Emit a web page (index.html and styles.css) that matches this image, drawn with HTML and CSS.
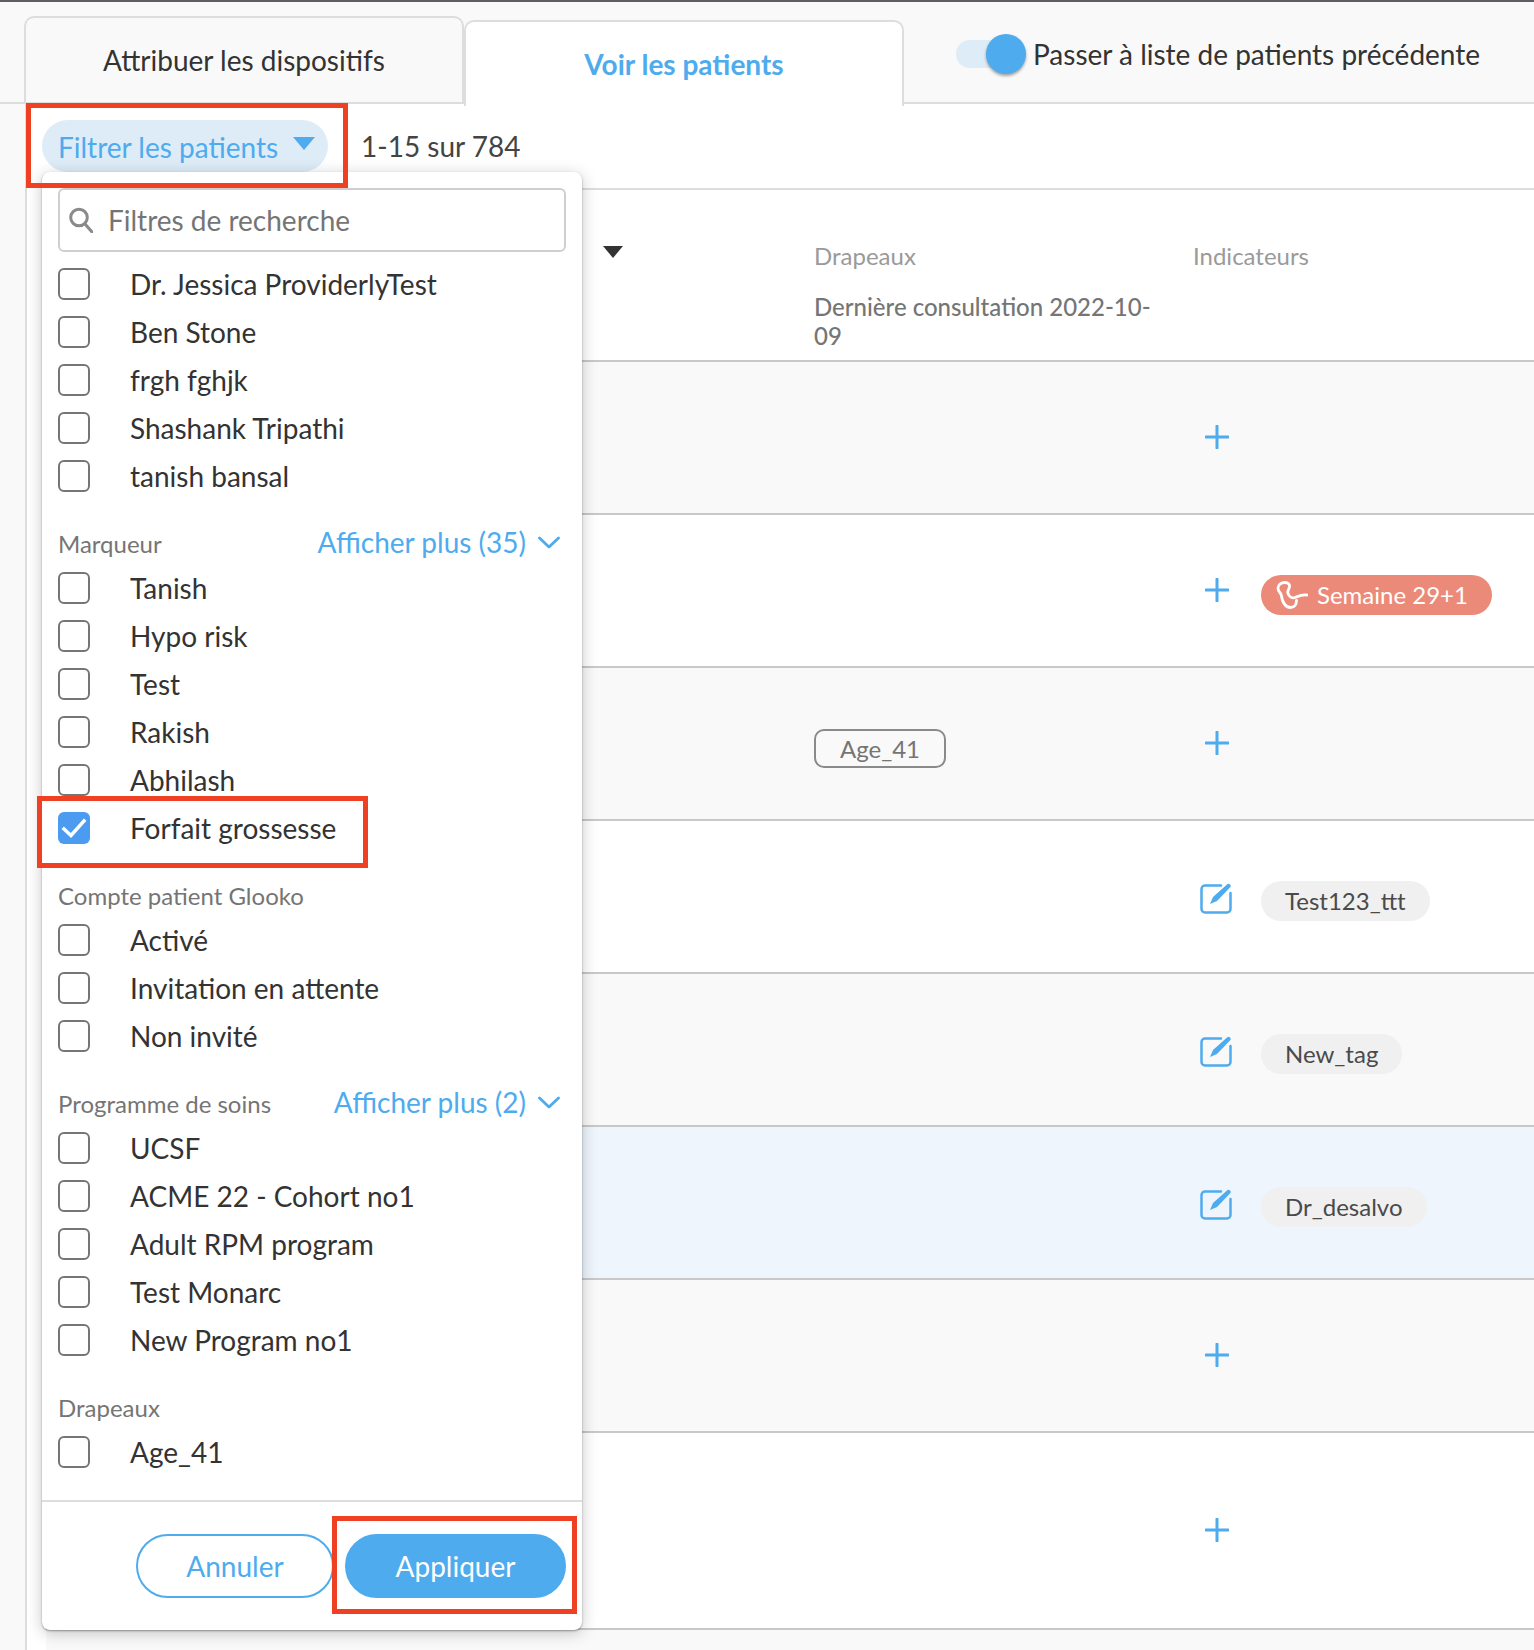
FILE: index.html
```html
<!DOCTYPE html>
<html lang="fr">
<head>
<meta charset="utf-8">
<title>Voir les patients</title>
<link rel="stylesheet" href="styles.css">
</head>
<body>
<div class="page">
  <header class="tabs">
    <div class="tab tab-idle">Attribuer les dispositifs</div>
    <div class="tab tab-active">Voir les patients</div>
    <div class="switch-wrap">
      <span class="switch"><span class="knob"></span></span>
      <span class="switch-label">Passer à liste de patients précédente</span>
    </div>
  </header>
  <main class="panel">
    <div class="toolbar">
      <div class="filter-pill"><span class="pill-text">Filtrer les patients</span><span class="pill-caret"></span></div>
      <span class="count">1-15 sur 784</span>
    </div>
    <div class="table-head">
      <div class="head-col1"><span class="sort-caret"></span></div>
      <div class="head-col2">
        <div class="head-title">Drapeaux</div>
        <div class="head-sub">Dernière consultation 2022-10-09</div>
      </div>
      <div class="head-col3"><div class="head-title">Indicateurs</div></div>
    </div>

    <div class="row row-gray"><div></div><div></div><div class="cell-ind"><span class="act">
      <svg class="plus" viewBox="0 0 24 24"><path d="M12 1v22M1 12h22"/></svg></span></div></div>

    <div class="row"><div></div><div></div><div class="cell-ind"><span class="act">
      <svg class="plus" viewBox="0 0 24 24"><path d="M12 1v22M1 12h22"/></svg></span>
      <span class="tag tag-red">
        <svg class="fetus" viewBox="0 0 32 28"><path d="M9 1.500C5 1.500 2 4 2 7.500C2 10.500 5 11.500 5.500 15C6 20 9 26.500 14.500 26.500C18.500 26.500 20.500 23 20.500 19.500M9 1.500C12 1.500 14 3.500 13.500 6C13 8.500 11 9.500 12 12.500C13 15.500 16 17.500 19 16.500C22 15.500 25 13 31 14"/></svg>
        Semaine 29+1</span></div></div>

    <div class="row row-gray"><div></div><div class="cell-flag"><span class="flag">Age_41</span></div><div class="cell-ind"><span class="act">
      <svg class="plus" viewBox="0 0 24 24"><path d="M12 1v22M1 12h22"/></svg></span></div></div>

    <div class="row"><div></div><div></div><div class="cell-ind"><span class="act">
      <svg class="edit" viewBox="0 0 32 31"><path class="edit-box" d="M21 2.500H5A3.500 3.500 0 0 0 1.500 6v20A3.500 3.500 0 0 0 5 29.500h22a3.500 3.500 0 0 0 3.500-3.500V10"/><path class="edit-pen" d="M10 21l3-7L27 1.500c1-1 2-1 3 0s1 2 0 3L17 18z"/></svg></span>
      <span class="tag tag-gray">Test123_ttt</span></div></div>

    <div class="row row-gray"><div></div><div></div><div class="cell-ind"><span class="act">
      <svg class="edit" viewBox="0 0 32 31"><path class="edit-box" d="M21 2.500H5A3.500 3.500 0 0 0 1.500 6v20A3.500 3.500 0 0 0 5 29.500h22a3.500 3.500 0 0 0 3.500-3.500V10"/><path class="edit-pen" d="M10 21l3-7L27 1.500c1-1 2-1 3 0s1 2 0 3L17 18z"/></svg></span>
      <span class="tag tag-gray">New_tag</span></div></div>

    <div class="row row-blue"><div></div><div></div><div class="cell-ind"><span class="act">
      <svg class="edit" viewBox="0 0 32 31"><path class="edit-box" d="M21 2.500H5A3.500 3.500 0 0 0 1.500 6v20A3.500 3.500 0 0 0 5 29.500h22a3.500 3.500 0 0 0 3.500-3.500V10"/><path class="edit-pen" d="M10 21l3-7L27 1.500c1-1 2-1 3 0s1 2 0 3L17 18z"/></svg></span>
      <span class="tag tag-gray">Dr_desalvo</span></div></div>

    <div class="row row-gray"><div></div><div></div><div class="cell-ind"><span class="act">
      <svg class="plus" viewBox="0 0 24 24"><path d="M12 1v22M1 12h22"/></svg></span></div></div>

    <div class="row row-tall"><div></div><div></div><div class="cell-ind"><span class="act">
      <svg class="plus" viewBox="0 0 24 24"><path d="M12 1v22M1 12h22"/></svg></span></div></div>

    <div class="row row-gray row-cut"></div>
  </main>

  <aside class="popup">
    <div class="popup-body">
      <div class="search">
        <svg class="search-ico" viewBox="0 0 24 26"><circle cx="10" cy="10.500" r="8.300"/><path d="M16 17l7 8"/></svg>
        <span>Filtres de recherche</span>
      </div>
      <div class="opt"><span class="box"></span>Dr. Jessica ProviderlyTest</div>
      <div class="opt"><span class="box"></span>Ben Stone</div>
      <div class="opt"><span class="box"></span>frgh fghjk</div>
      <div class="opt"><span class="box"></span>Shashank Tripathi</div>
      <div class="opt"><span class="box"></span>tanish bansal</div>

      <div class="group-head"><span class="group-label">Marqueur</span><span class="more">Afficher plus (35)<svg class="chev" viewBox="0 0 22 13"><path d="M1.500 2l9.500 9 9.500-9"/></svg></span></div>
      <div class="opt"><span class="box"></span>Tanish</div>
      <div class="opt"><span class="box"></span>Hypo risk</div>
      <div class="opt"><span class="box"></span>Test</div>
      <div class="opt"><span class="box"></span>Rakish</div>
      <div class="opt"><span class="box"></span>Abhilash</div>
      <div class="opt"><span class="box box-on"><svg viewBox="0 0 32 32"><path d="M6 17l7 6.500L26 9"/></svg></span>Forfait grossesse</div>

      <div class="group-head"><span class="group-label">Compte patient Glooko</span></div>
      <div class="opt"><span class="box"></span>Activé</div>
      <div class="opt"><span class="box"></span>Invitation en attente</div>
      <div class="opt"><span class="box"></span>Non invité</div>

      <div class="group-head"><span class="group-label">Programme de soins</span><span class="more">Afficher plus (2)<svg class="chev" viewBox="0 0 22 13"><path d="M1.500 2l9.500 9 9.500-9"/></svg></span></div>
      <div class="opt"><span class="box"></span>UCSF</div>
      <div class="opt"><span class="box"></span>ACME 22 - Cohort no1</div>
      <div class="opt"><span class="box"></span>Adult RPM program</div>
      <div class="opt"><span class="box"></span>Test Monarc</div>
      <div class="opt"><span class="box"></span>New Program no1</div>

      <div class="group-head"><span class="group-label">Drapeaux</span></div>
      <div class="opt"><span class="box"></span>Age_41</div>
    </div>
    <div class="popup-foot">
      <button class="btn btn-ghost">Annuler</button>
      <button class="btn btn-solid">Appliquer</button>
    </div>
  </aside>

  <div class="mark mark-filter"></div>
  <div class="mark mark-forfait"></div>
  <div class="mark mark-apply"></div>
</div>
</body>
</html>
```

FILE: styles.css
```css
* { box-sizing: border-box; }
html, body { margin: 0; padding: 0; }
body {
  background: #f9f9f9;
  font-family: Lato, "Open Sans", sans-serif;
  color: #3a3a3a;
  font-size: 28px;
}
.page {
  position: relative;
  width: 1534px;
  height: 1650px;
  overflow: hidden;
  border-top: 2px solid #5f5f66;
}

/* Tabs */
.tabs {
  display: flex;
  align-items: flex-start;
  height: 102px;
  padding-left: 24px;
  border-bottom: 2px solid #dddddd;
}
.tab {
  display: flex;
  align-items: center;
  justify-content: center;
  width: 440px;
  border: 2px solid #dddddd;
  border-bottom: none;
  border-radius: 10px 10px 0 0;
}
.tab-idle {
  height: 86px;
  margin-top: 14px;
  background: #f9f9f9;
  color: #333;
}
.tab-active {
  height: 86px;
  margin-top: 18px;
  background: #fff;
  color: #4dabee;
  font-weight: 700;
  position: relative;
  z-index: 2;
}
.switch-wrap {
  display: flex;
  align-items: center;
  margin-left: 52px;
  margin-top: 35px;
}
.switch {
  position: relative;
  display: block;
  width: 50px;
  height: 28px;
  border-radius: 14px;
  background: #deecf8;
}
.knob {
  position: absolute;
  top: -6px;
  left: 30px;
  width: 40px;
  height: 40px;
  border-radius: 50%;
  background: #4dabee;
  box-shadow: 0 2px 3px rgba(0,0,0,.35);
}
.switch-label { margin-left: 27px; color: #333; }

/* Panel */
.panel {
  margin-left: 25px;
  border-left: 2px solid #dddddd;
  background: #fff;
  height: 1546px;
  overflow: hidden;
}
.toolbar {
  display: flex;
  align-items: center;
  height: 84px;
  padding-left: 15px;
}
.filter-pill {
  display: flex;
  align-items: center;
  flex: none;
  width: 286px;
  height: 52px;
  padding: 2px 16px 0;
  border-radius: 26px;
  background: #deecf8;
  color: #4dabee;
}
.pill-text { white-space: nowrap; }
.pill-caret {
  margin: -7px 0 0 15px;
  border-left: 11px solid transparent;
  border-right: 11px solid transparent;
  border-top: 13px solid #4dabee;
}
.count { margin-left: 33px; color: #444; }

.table-head, .row {
  display: grid;
  grid-template-columns: 768px 379px 1fr;
  margin-left: 19px;
}
.table-head {
  height: 174px;
  border-top: 2px solid #dddddd;
  border-bottom: 2px solid #c8c8c8;
  padding-top: 51px;
}
.head-col1 { padding: 5px 0 0 557px; }
.sort-caret {
  display: block;
  width: 0;
  border-left: 10px solid transparent;
  border-right: 10px solid transparent;
  border-top: 12px solid #333;
}
.head-title { font-size: 24px; line-height: 30px; color: #9a9a9a; }
.head-sub {
  margin-top: 21px;
  font-size: 24px;
  line-height: 29px;
  font-weight: 500;
  color: #757575;
  width: 340px;
}

.row {
  height: 153px;
  border-bottom: 2px solid #c8c8c8;
  background: #fff;
}
.row-gray { background: #f9f9f9; }
.row-blue { background: #eef5fc; }
.row-tall { height: 197px; }
.row-cut { border-bottom: none; }
.cell-flag, .cell-ind { display: flex; align-items: center; }
.act {
  display: flex;
  align-items: center;
  justify-content: center;
  width: 46px;
  flex: none;
}
.plus { width: 24px; height: 24px; margin: 0 0 2px 2px; fill: none; stroke: #4dabee; stroke-width: 3; stroke-linecap: round; }
.edit { width: 32px; height: 31px; margin-top: 4px; }
.edit-box { fill: none; stroke: #4dabee; stroke-width: 2.500; stroke-linecap: round; }
.edit-pen { fill: #4dabee; }
.tag {
  display: inline-flex;
  align-items: center;
  height: 40px;
  margin: 8px 0 0 22px;
  border-radius: 20px;
  font-size: 24px;
}
.tag-gray { padding: 0 24px; background: #f0f0f0; color: #4a4a4a; }
.tag-red { width: 231px; padding-left: 15px; background: #ec8a7a; color: #fff; gap: 9px; }
.fetus { width: 32px; height: 28px; fill: none; stroke: #fff; stroke-width: 2.800; stroke-linecap: round; stroke-linejoin: round; }
.flag {
  display: inline-flex;
  align-items: center;
  justify-content: center;
  width: 132px;
  height: 39px;
  margin-top: 10px;
  border: 2px solid #8a8a8a;
  border-radius: 10px;
  font-size: 24px;
  color: #757575;
}

/* Popup */
.popup {
  position: absolute;
  left: 42px;
  top: 170px;
  width: 540px;
  height: 1458px;
  background: #fff;
  border-radius: 8px;
  box-shadow: 0 1px 2px rgba(0,0,0,.35), 0 3px 16px rgba(0,0,0,.22);
  z-index: 3;
  display: flex;
  flex-direction: column;
}
.popup-body { padding: 16px 16px 0; height: 1330px; border-bottom: 2px solid #dddddd; }
.search {
  display: flex;
  align-items: center;
  height: 64px;
  padding-left: 9px;
  margin-bottom: 8px;
  border: 2px solid #cfcfcf;
  border-radius: 6px;
  color: #757575;
}
.search-ico { width: 24px; height: 26px; margin-right: 15px; fill: none; stroke: #8a8a8a; stroke-width: 3; stroke-linecap: round; }
.opt { display: flex; align-items: center; height: 48px; color: #333; white-space: nowrap; }
.box {
  flex: none;
  display: block;
  width: 32px;
  height: 32px;
  margin-right: 40px;
  border: 2px solid #757575;
  border-radius: 6px;
  background: #fff;
}
.box-on { border: none; background: #4b9bf0; }
.box-on svg { display: block; width: 32px; height: 32px; fill: none; stroke: #fff; stroke-width: 3.500; stroke-linecap: square; }
.group-head {
  display: flex;
  align-items: flex-end;
  justify-content: space-between;
  height: 64px;
  padding-bottom: 7px;
}
.group-label { font-size: 24px; line-height: 26px; color: #757575; }
.more { display: flex; align-items: center; margin-right: 6px; color: #4dabee; line-height: 34px; margin-bottom: -2px; }
.chev { width: 22px; height: 13px; margin-left: 12px; fill: none; stroke: #4dabee; stroke-width: 2.800; stroke-linecap: round; stroke-linejoin: round; }
.popup-foot {
  display: flex;
  justify-content: flex-end;
  gap: 11px;
  padding: 32px 16px 0;
}
.btn {
  height: 64px;
  border-radius: 32px;
  font: inherit;
  padding: 0;
}
.btn-ghost { width: 198px; background: #fff; border: 2px solid #4dabee; color: #4dabee; }
.btn-solid { width: 221px; background: #4dabee; border: 2px solid #4dabee; color: #fff; }

/* Annotation boxes */
.mark {
  position: absolute;
  border: 5px solid #ee4023;
  z-index: 4;
}
.mark-filter { left: 26px; top: 101px; width: 322px; height: 85px; }
.mark-forfait { left: 37px; top: 794px; width: 331px; height: 72px; }
.mark-apply { left: 332px; top: 1514px; width: 245px; height: 98px; }
```
